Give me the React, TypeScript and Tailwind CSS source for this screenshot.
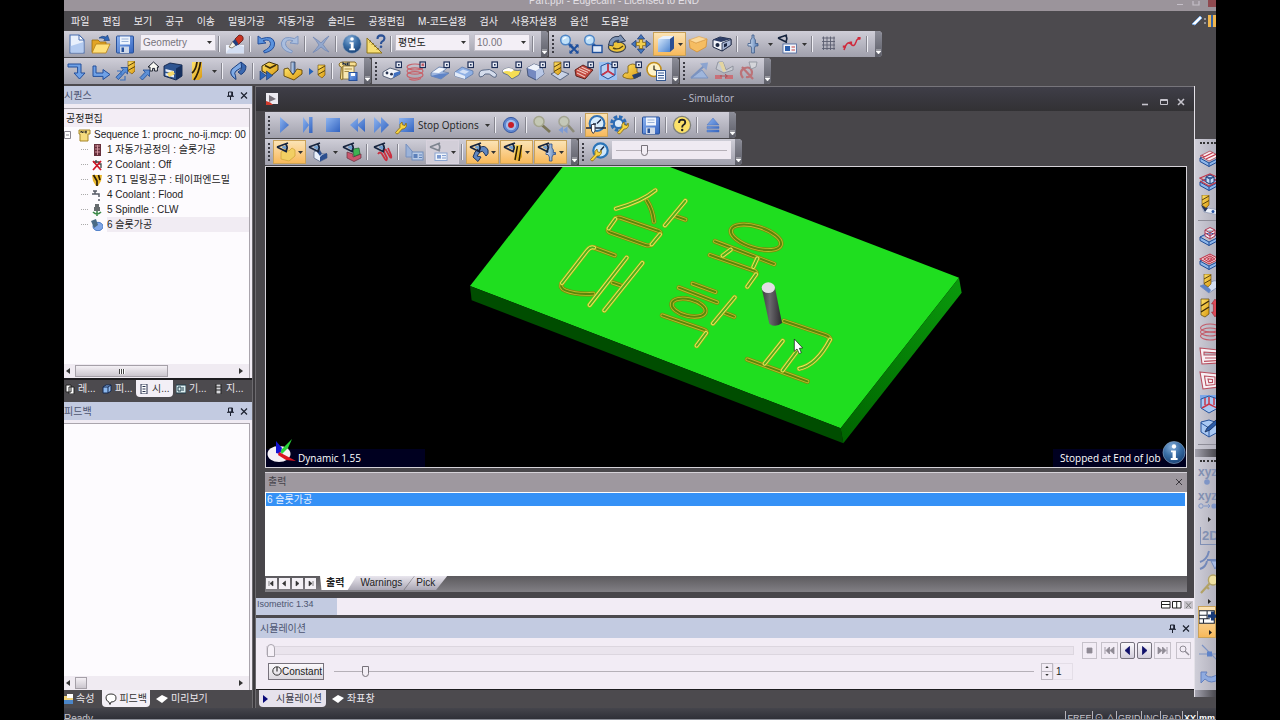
import React from "react";

type Node = React.ReactNode;

/* ---------- icon drawings, all on a 20 x 20 grid ---------- */

const Flag = () => (
  <g>
    <rect x="14" y="1" width="5.5" height="5.5" fill="#eef1fa" stroke="#1b2c55" strokeWidth="1.2" />
    <rect x="16" y="3" width="1.6" height="1.6" fill="#1b2c55" />
  </g>
);

const Eye = () => (
  <g>
    <path d="M1 5 L12 1 M1 5 L11 10 M9.5 2.2 Q12.5 5 10 9" fill="none" stroke="#17253f" strokeWidth="1.8" />
    <path d="M6 4.6 L9.6 3.4 Q10.8 5.6 9.4 7.6 L6 5.8Z" fill="#6f9fd0" />
  </g>
);

const Drill = ({ x = 0, y = 0 }: { x?: number; y?: number }) => (
  <g transform={`translate(${x} ${y})`}>
    <path d="M0 0 H7 V10 L4 13 L0 10Z" fill="url(#gold)" stroke="#6b4a08" strokeWidth=".6" />
    <path d="M0 5 L7 1 M0 9.5 L7 5.5" stroke="#5a420c" strokeWidth="1" />
  </g>
);

const Wrench = ({ x = 0, y = 0 }: { x?: number; y?: number }) => (
  <g transform={`translate(${x} ${y})`}>
    <path d="M1.5 11.5 L6 6.5 Q5 3 8 1 L8.5 3.8 L11 4.5 L12 2 Q13.5 6 10 7.8 L8.2 8 L4 12.8 Q2 13.4 1.5 11.5Z" fill="#f6d243" stroke="#8a6a10" strokeWidth=".8" />
  </g>
);

const Lens = () => (
  <g>
    <path d="M9 9 L14 14" stroke="#2b5ea8" strokeWidth="2.6" />
    <circle cx="6.5" cy="6" r="4.8" fill="#bfe0f8" stroke="#4f86c6" strokeWidth="1.5" />
    <path d="M4 5.5 Q5 3.5 7.4 3.6" stroke="#fff" strokeWidth="1.2" fill="none" />
  </g>
);

const Slab = () => (
  <path d="M1 11 L11 6 L20 11 V14 L10 19.5 L1 14.5Z M1 11 L10 16 L20 11 M10 16 V19.5" fill="#8db6ea" stroke="#1e4b96" strokeWidth="1" />
);

const icons: Record<string, Node> = {
  New: (
    <g>
      <path d="M3 1 H12 L17 6 V19 H3Z" fill="#e9f0fc" stroke="#4a6fb0" strokeWidth="1.1" />
      <path d="M3.8 12 L16.4 8 V18.4 H3.8Z" fill="#b4cbf0" />
      <path d="M12 1 L12 6 H17Z" fill="#fff" stroke="#4a6fb0" strokeWidth="1" />
    </g>
  ),
  Open: (
    <g>
      <path d="M1 6 H7 L9 8 H15 V18 H1Z" fill="#e2a425" stroke="#9b6c10" strokeWidth=".8" />
      <path d="M5 10 H19 L15 19 H1Z" fill="#ffe07a" stroke="#b58218" strokeWidth=".8" />
      <path d="M8 4 Q11 1 15 3 L16.5 1 L18.5 6.5 L12.8 6.5 L14 5 Q11 3.6 8 4Z" fill="#2f67b8" stroke="#1a3c78" strokeWidth=".6" />
    </g>
  ),
  Save: (
    <g>
      <rect x="1.5" y="2" width="17" height="17" rx="1" fill="url(#blue)" stroke="#27509a" />
      <rect x="5" y="2.5" width="10" height="8" fill="#eef4fd" />
      <path d="M6.5 5 H13.5 M6.5 7.5 H13.5" stroke="#9bb3d8" />
      <rect x="5" y="12.5" width="9" height="6.5" fill="#cfd8e8" />
      <rect x="6.5" y="13.5" width="2.5" height="4.5" fill="#27509a" />
    </g>
  ),
  Erase: (
    <g>
      <path d="M1 11 H19 V19.5 H1Z" fill="#eef2fb" />
      <path d="M3 16 L10 9 L19 13 V19 H1Z" fill="#d3def2" />
      <path d="M4 13 L8 7 L12 10.5 L7 14Z" fill="#f4efe4" stroke="#756b5b" strokeWidth=".8" />
      <path d="M10 5 L14 1 Q19 1 18 6 L13.5 10.5Z" fill="#c83322" stroke="#5b1712" strokeWidth=".8" />
      <path d="M10 5 L13.5 10.5 L11 12 L7.5 7.8Z" fill="#22407e" />
    </g>
  ),
  Undo: <path d="M2 2 L2 10 L10 9 L7 6.7 Q14 4.5 14.5 9.5 Q14.5 14 7.5 17 L8.5 19 Q19 16.5 18.6 9 Q17 1 5.5 4.6Z" fill="#5b93de" stroke="#244f9c" strokeWidth="1" />,
  Redo: <path d="M18 2 L18 10 L10 9 L13 6.7 Q6 4.5 5.5 9.5 Q5.5 14 12.5 17 L11.5 19 Q1 16.5 1.4 9 Q3 1 14.5 4.6Z" fill="#a9bedf" stroke="#7f97c2" strokeWidth="1" />,
  Delete: <path d="M2 3 Q8 7 10 9 Q13 5 18 2 Q14 7 12 10.5 Q15 15 18 18 Q13 16 10 13 Q7 16 2 18.5 Q6 14 8 11 Q5 6 2 3Z" fill="#93a8cd" stroke="#7187b2" strokeWidth=".8" />,
  Info: (
    <g>
      <circle cx="10" cy="10" r="9.2" fill="url(#orb)" stroke="#8fa9c8" strokeWidth=".5" />
      <circle cx="10" cy="5" r="1.8" fill="#fff" />
      <path d="M7.5 8.3 H11.6 V14.6 H13 V16.2 H7.3 V14.6 H8.8 V9.8 H7.5Z" fill="#fff" />
    </g>
  ),
  Measure: (
    <g>
      <path d="M1 4 L16 19 H1Z" fill="#f6de74" stroke="#8f7417" strokeWidth="1" />
      <path d="M3.5 8 L5 6.6 M6 10.5 L7.5 9 M8.5 13 L10 11.5 M11 15.5 L12.5 14" stroke="#554208" strokeWidth="1" />
      <path d="M11.5 5 Q11.5 1.4 15 1.4 Q18.6 1.6 18.4 4.6 Q18.2 6.6 16 7.6 Q15 8.2 15 10" fill="none" stroke="#2c5296" strokeWidth="2.1" />
      <circle cx="15" cy="12.8" r="1.3" fill="#2c5296" />
    </g>
  ),
  ZoomExtents: (
    <g>
      <Lens />
      <path d="M11 11 L19 19 M19 11 L11 19" stroke="#1e4f9c" strokeWidth="1.8" />
      <path d="M10.5 10.5 h3.5 l-3.5 3.5Z M19.5 10.5 v3.5 l-3.5 -3.5Z M10.5 19.5 v-3.5 l3.5 3.5Z M19.5 19.5 h-3.5 l3.5 -3.5Z" fill="#1e4f9c" />
    </g>
  ),
  ZoomWindow: (
    <g>
      <Lens />
      <rect x="9.5" y="11.5" width="9.5" height="7" fill="#dfe9f8" stroke="#1e4f9c" strokeWidth="1.4" />
    </g>
  ),
  Orbit: (
    <g>
      <ellipse cx="10" cy="13" rx="8.6" ry="5.4" fill="#efc53a" stroke="#3d4453" strokeWidth="1.2" />
      <path d="M1.5 11 Q3 1.5 12 2.5 L13.5 .8 L18.5 7 L10.5 8.6 L12 6.2 Q6 6 6 12Z" fill="#7d93b5" stroke="#2e3c56" strokeWidth="1" />
      <path d="M6 14 Q11 16.5 16 12" fill="none" stroke="#5a4a14" strokeWidth="1.4" />
    </g>
  ),
  Pan: (
    <g>
      <path d="M10 .5 L13.6 5 H6.4Z M10 19.5 L13.6 15 H6.4Z M.5 10 L5 6.4 V13.6Z M19.5 10 L15 6.4 V13.6Z" fill="#4777bd" stroke="#1e3f7d" strokeWidth=".8" />
      <path d="M8.4 5.4 H11.6 V8.4 H14.6 V11.6 H11.6 V14.6 H8.4 V11.6 H5.4 V8.4 H8.4Z" fill="#f3cf4d" stroke="#846512" strokeWidth=".8" />
    </g>
  ),
  Cube: (
    <g>
      <path d="M2 5 L7 2 H18 L14 5Z" fill="#e8f1fc" />
      <path d="M2 5 H14 V18 H2Z" fill="url(#sky)" />
      <path d="M14 5 L18 2 V14.5 L14 18Z" fill="#2a4f93" />
    </g>
  ),
  Shell: (
    <g>
      <path d="M1 6 L8 9 L19 5 L18 13 L9 18 L2 14Z" fill="#f5bd62" stroke="#d38f34" strokeWidth=".8" />
      <path d="M1 6 L11 2.5 L19 5 L8 9Z" fill="#fbd99a" stroke="#e0a552" strokeWidth=".7" />
    </g>
  ),
  Section: (
    <g>
      <path d="M1 6 L8 3 L19 5 V11 L10 17 L1 13Z" fill="#f2f4fa" stroke="#1c2742" strokeWidth="1" />
      <path d="M1 6 L9 8 L19 5 L8 3Z" fill="#2d3d66" />
      <circle cx="5.5" cy="11" r="2" fill="#1c2742" />
      <path d="M10 9 L19 5.5 V11 L10 17Z" fill="#a9b7d4" stroke="#1c2742" strokeWidth=".8" />
      <path d="M12 10 L15 9 V12 L12 13.5Z" fill="#1c2742" />
    </g>
  ),
  Holder: <path d="M9 1 H11 V4 L12.4 6 V9.5 H15 V12 H12.4 L11.4 14 V19 H8.6 V14 L7.6 12 H5 V9.5 H7.6 V6 L9 4Z" fill="url(#steel)" stroke="#3c5a88" strokeWidth=".8" />,
  ViewBox: (
    <g>
      <path d="M1 4 L10 1 M1 4 L10 8.5 M8.5 1.6 Q11 4 8.8 7.6" fill="none" stroke="#17253f" strokeWidth="1.6" />
      <rect x="6" y="10" width="13.5" height="9" fill="#f4f6fb" stroke="#46649c" strokeWidth=".8" />
      <rect x="8" y="12" width="5" height="5" fill="#2a5fae" />
      <path d="M14.5 13 H18 M14.5 16 H18" stroke="#c64242" strokeWidth="1.2" />
    </g>
  ),
  Grid: <path d="M4 4 H17 M4 7.5 H17 M4 11 H17 M4 14.5 H17 M5.5 2.5 V16 M9 2.5 V16 M12.5 2.5 V16 M16 2.5 V16" stroke="#5b5f70" strokeWidth=".9" />,
  Spline: (
    <g>
      <path d="M2 16 Q5 6 9 10 Q12 14 14 8 Q15 4 18 5" fill="none" stroke="#cf2a3c" strokeWidth="1.5" />
      <path d="M.8 11.5 h3 v2.2 h-3Z M7.5 7.5 h2.6 v2.6 h-2.6Z M15.6 3 h3 v2.6 h-3Z" fill="#cf2a3c" />
    </g>
  ),
  StepDown: <path d="M1 3 H14 V12 H18 L12.5 18 L7 12 H10.6 V6 H1Z" fill="#6fa1e6" stroke="#234f9b" strokeWidth="1" />,
  StepRight: <path d="M2 5 H5 V12 H12 V8.5 L19 13.5 L12 18.5 V15.4 H2Z" fill="#6fa1e6" stroke="#234f9b" strokeWidth="1" />,
  ToTool: (
    <g>
      <Drill x={13} y={0} />
      <path d="M6 6.5 H12.5 V13 L10.4 11 L3.4 18.6 L1 16.2 L8.2 8.8Z" fill="#5c8fd6" stroke="#1e4b96" strokeWidth=".8" />
      <path d="M2 10 H6 V14 M5 19 H10 V15" fill="none" stroke="#3d70bb" strokeWidth="1.2" />
    </g>
  ),
  ToHome: (
    <g>
      <path d="M9 6 L14.5 1 L20 6 H18.4 V10 H15.6 V7.4 H13.6 V10 H11 V6Z" fill="#f7f7f2" stroke="#1d2230" strokeWidth="1" />
      <path d="M4 9 H10.5 V15.5 L8.6 13.6 L3.4 19 L1 16.6 L6.2 11.2Z" fill="#5c8fd6" stroke="#1e4b96" strokeWidth=".8" />
    </g>
  ),
  Store: (
    <g>
      <path d="M1 5 L7 2 L19 4 V15 L13 19 L1 15Z" fill="#2f5591" stroke="#13254a" strokeWidth=".9" />
      <path d="M13 7.5 L19 4 V15 L13 19Z" fill="#16305f" />
      <path d="M2.5 8 L11 10 V12.4 L2.5 10.5Z M2.5 12 L11 14 V16.6 L2.5 14.4Z" fill="#e4ecf8" />
      <path d="M4 12 L10 10 L12 13 L6 16Z" fill="#f6d96c" />
    </g>
  ),
  DrillTool: (
    <g>
      <path d="M5 1 H15 V16 L12 19 H5Z" fill="url(#gold)" />
      <path d="M5 12 Q9 9 10 1 M7 19 Q12 12 13.5 1" stroke="#2b1e08" strokeWidth="1.8" fill="none" />
    </g>
  ),
  Rotate: (
    <g>
      <path d="M13 1 L4 8 Q1 12 5 16 L8 18.5 L7.5 14.8 Q5.6 12 8 10 L15 5.6Z" fill="#7fabe6" stroke="#1c3f7e" strokeWidth="1" />
      <path d="M13 1 L18 5 Q18 11 13 13.5 L10 11 Q14 9 13.6 6.4Z" fill="#3a68b0" stroke="#1c3f7e" strokeWidth="1" />
    </g>
  ),
  Ffwd: (
    <g>
      <path d="M3 5 L10 1 L19 4 V9 L12 15 L3 10Z" fill="url(#gold)" stroke="#3f2f08" strokeWidth="1" />
      <path d="M6 4.5 L11 7 L17 4" fill="none" stroke="#3f2f08" strokeWidth="1.6" />
      <path d="M1 10 L7 14.5 L1 19Z M7.5 10 L13.5 14.5 L7.5 19Z" fill="#2d66b9" stroke="#143870" strokeWidth=".6" />
    </g>
  ),
  Plunge: (
    <g>
      <path d="M1 8 L5 7 L10 14 L14 8 L19 9 V13 L11 19 L1 15Z" fill="url(#gold)" stroke="#5d450a" strokeWidth=".9" />
      <path d="M8 1 H12 V11 L10 13 L8 11Z" fill="url(#steel)" stroke="#35425c" strokeWidth=".8" />
    </g>
  ),
  NextTool: (
    <g>
      <path d="M2 7 L6.5 10.5 L2 14Z" fill="#2563b8" />
      <Drill x={11} y={4} />
    </g>
  ),
  NcCode: (
    <g>
      <path d="M1 3 Q2 1 5 1 H17 Q19 2 18 5 H5 V18 Q3 20 2.4 17 L3.4 6 Q1 6 1 3Z" fill="#f7df92" stroke="#7d611c" strokeWidth=".9" />
      <path d="M5 5 H16 V18 H5Z" fill="#f9e8b2" stroke="#7d611c" strokeWidth=".7" />
      <path d="M5 4 V1.8 L8 4 V1.8 M12 2 H9.6 V4 H12" stroke="#17253f" strokeWidth="1.1" fill="none" />
      <path d="M6.5 8 H14 M6.5 10.5 H11" stroke="#a88c45" />
      <rect x="11" y="11.5" width="8" height="8" fill="url(#blue)" stroke="#27509a" />
      <rect x="13" y="12" width="4" height="3" fill="#fff" />
    </g>
  ),
  MillFace: (
    <g>
      <path d="M1 11 L8 7 L18 10 V13 L9 18 L1 15Z" fill="#f3f5fa" stroke="#3a4660" strokeWidth=".8" />
      <circle cx="5" cy="12" r="1.4" fill="#2a3654" />
      <circle cx="9.5" cy="13.2" r="1.4" fill="#2a3654" />
      <path d="M12 12 L18 10 V13 L11 17Z" fill="#3f6fc0" />
      <Flag />
    </g>
  ),
  Spiral: (
    <g fill="none" stroke="#c8626a" strokeWidth="1.2">
      <ellipse cx="9" cy="6" rx="8" ry="3" />
      <ellipse cx="9" cy="10" rx="8" ry="3.2" />
      <ellipse cx="9" cy="14" rx="8" ry="3.4" />
      <path d="M3 18 Q9 20.5 15 17.5" />
      <Flag />
    </g>
  ),
  Step: (
    <g>
      <path d="M1 12 L9 6 L17 7 L13 10.5 L19 12 L11 18 L1 15Z" fill="#9fb6de" stroke="#5d769f" strokeWidth=".7" />
      <path d="M2 11.4 L9 6.7 L16 7.4 L9 12Z" fill="#f2f6fd" />
      <path d="M1 15 L9 13 L19 12 L11 18Z" fill="#5e83c6" />
      <Flag />
    </g>
  ),
  Pocket: (
    <g>
      <path d="M1 11 L8 6 L19 10 V13 L11 18 L1 15Z" fill="#8fb0e4" stroke="#5573a8" strokeWidth=".7" />
      <path d="M5 11 L9 8.5 L15 10.5 L11 13Z" fill="#d3e0f6" />
      <path d="M1 11 L11 15 V18 L1 15Z" fill="#e3ebf8" />
      <Flag />
    </g>
  ),
  Profile: (
    <g>
      <path d="M1 14 Q1 9 6 9 Q12 7 16 11 Q20 13 18 16 Q16 17 14 15 Q12 12 7 13 Q5 16 2 16Z" fill="#d4dcec" stroke="#51617f" strokeWidth=".9" />
      <Flag />
    </g>
  ),
  Surface: (
    <g>
      <path d="M1 9 Q7 5 12 9 Q16 10 19 9 L17 14 L10 18 Q6 13 1 12Z" fill="#f5dd54" stroke="#5f6d89" strokeWidth=".9" />
      <path d="M1 9 Q7 5 12 9 L9 11 Q5 9 1 11Z" fill="#fff" />
      <Flag />
    </g>
  ),
  Solid: (
    <g>
      <path d="M1 7 L8 3 L16 6 L18 13 L10 19 L2 15Z" fill="#7589c0" stroke="#344568" strokeWidth=".8" />
      <path d="M1 7 L10 10 L16 6 L8 3Z" fill="#eff3fb" />
      <path d="M10 10 L16 6 L18 13 L10 19Z" fill="#b9c8e6" />
      <Flag />
    </g>
  ),
  DrillOp: (
    <g>
      <path d="M1 13 L9 9 L19 13 L10 19Z" fill="#c9d3e6" stroke="#42516e" strokeWidth=".8" />
      <Drill x={4} y={1} />
      <Flag />
    </g>
  ),
  Rough: (
    <g>
      <path d="M1 9 L9 4 L19 9 L11 18 L2 15Z" fill="#c24a41" stroke="#561712" strokeWidth=".9" />
      <path d="M3 9 L12 13 M5 7.6 L14 11.6 M7.5 6 L16 10 M3 12 L11 16" stroke="#f2c8bd" strokeWidth="1.1" />
      <Flag />
    </g>
  ),
  Planes: (
    <g>
      <rect x="1" y="1" width="18" height="18" fill="#9ec2f2" />
      <path d="M3 5 L10 2 L17 5 V14 L10 18 L3 14Z M10 2 V10 L3 14 M10 10 L17 14" fill="#b7cff2" stroke="#27539c" strokeWidth="1" />
      <path d="M10 10 V3 M10 10 L4 14 M10 10 L16 14" stroke="#c8374a" strokeWidth="1.8" />
      <Flag />
    </g>
  ),
  Cap: (
    <g>
      <path d="M1 14 Q3 11 6 12 V5 Q11 1 15 5 V11 Q20 13 16 16 Q9 20 1 16Z" fill="url(#gold)" stroke="#7a5a0c" strokeWidth=".8" />
      <path d="M10 14 L19 11 V15 L12 18Z" fill="#27406e" />
      <Flag />
    </g>
  ),
  Timing: (
    <g>
      <circle cx="8" cy="8.5" r="7" fill="#fdf3c9" stroke="#c08e1d" strokeWidth="1.6" />
      <path d="M8 4.5 V8.5 L12 10" stroke="#3a3420" strokeWidth="1.3" fill="none" />
      <rect x="10.5" y="9.5" width="9" height="10" fill="#f4f8ff" stroke="#34588f" />
      <path d="M12 12 H18 M12 14.5 H18 M12 17 H18" stroke="#34588f" strokeWidth="1.1" />
    </g>
  ),
  Angle: (
    <g>
      <path d="M1 17 H18 L12 9Z" fill="#9fb6dc" stroke="#7b93c0" />
      <path d="M1 17 L14 5" stroke="#7b93c0" strokeWidth="2" />
      <path d="M10 2.5 L18 1.5 L16.5 9.5Z" fill="#8ca4d0" />
    </g>
  ),
  FixA: (
    <g>
      <path d="M4 1 H9 L12 9 L19 5 V9 L10 12 L2 8Z" fill="#c8cbd2" stroke="#858a96" strokeWidth=".8" />
      <path d="M5 1 L9 1 L12 10 L9 11Z" fill="#e3d5a1" />
      <path d="M1 14 H8 V18 H1Z M11 14 H19 V18 H11Z" fill="#c87078" />
      <path d="M6 15 H13 M11 13 L13.4 15 L11 17" stroke="#a8545c" fill="none" />
    </g>
  ),
  FixB: (
    <g>
      <path d="M5 17 Q0 10 7 7 Q13 5 14 11 Q14 17 8 16 M4 6 L15 18" fill="none" stroke="#bb7378" strokeWidth="2.2" />
      <path d="M11 1 L13 8 L18 6 L19 1Z" fill="#d4d5da" stroke="#8c909b" strokeWidth=".8" />
    </g>
  ),
  Play: <path d="M5 2 L14 10 L5 18Z" fill="url(#blue)" />,
  StepFwd: <path d="M4 2 L10 10 L4 18Z M10 2 H13.5 V18 H10Z" fill="url(#blue)" />,
  Stop: <path d="M3 3 H17 V17 H3Z" fill="url(#blue)" />,
  Back: <path d="M11 3 V17 L3 10Z M18 3 V17 L10 10Z" fill="url(#blue)" />,
  Forward: <path d="M3 2 V18 L11 10Z M10 2 V18 L18 10Z" fill="url(#blue)" />,
  StopOpts: (
    <g>
      <path d="M4 3 H19 V17 H4Z" fill="url(#blue)" />
      <Wrench x={-1} y={6} />
    </g>
  ),
  Record: (
    <g>
      <circle cx="10" cy="10" r="7.6" fill="#5f86cf" stroke="#3a5ba2" />
      <circle cx="10" cy="10" r="5.2" fill="#a5bdea" />
      <circle cx="10" cy="10" r="3" fill="#c81e28" />
    </g>
  ),
  Find: (
    <g>
      <path d="M10 10 L18 17" stroke="#7b7658" strokeWidth="2.8" />
      <circle cx="7" cy="6.5" r="5" fill="#c4c8b4" stroke="#a4a58e" strokeWidth="1.6" />
    </g>
  ),
  FindBack: (
    <g>
      <path d="M11 9 L18 17" stroke="#8b8a78" strokeWidth="2.6" />
      <circle cx="8" cy="6.5" r="5" fill="#c4c8b8" stroke="#a4a594" strokeWidth="1.6" />
      <path d="M7 11.5 L2.5 15 L7 18.5Z M11.5 11.5 L7 15 L11.5 18.5Z" fill="#7f9bd2" />
    </g>
  ),
  Gauge: (
    <g>
      <circle cx="11" cy="8.5" r="7.4" fill="#d7ecfb" stroke="#3473b4" strokeWidth="2" />
      <path d="M11 8.5 L15 4.5 M7 9 H10" stroke="#17253f" strokeWidth="1.3" />
      <path d="M0 13 H20" stroke="#17253f" strokeWidth="1.4" />
      <path d="M5.5 9.5 H9 V16 L7.3 18.5 L5.5 16Z" fill="#fff" stroke="#3a3f4d" strokeWidth="1" />
    </g>
  ),
  Settings: (
    <g>
      <circle cx="8.5" cy="8.5" r="6.3" fill="none" stroke="#2f6db5" strokeWidth="4" strokeDasharray="3.2 1.7" />
      <circle cx="8.5" cy="8.5" r="4.6" fill="#dcebfa" stroke="#2f6db5" strokeWidth="2" />
      <Wrench x={6} y={6} />
    </g>
  ),
  Help: (
    <g>
      <circle cx="10" cy="10" r="8.6" fill="#fbe169" stroke="#7e8079" strokeWidth="1.3" />
      <path d="M7 8 Q7 4.6 10.2 4.6 Q13.4 4.8 13.2 7.6 Q13 9.2 11.3 10 Q10.2 10.6 10.2 12.4" fill="none" stroke="#222" strokeWidth="1.9" />
      <circle cx="10.2" cy="15" r="1.2" fill="#222" />
    </g>
  ),
  Eject: <path d="M10 3 L16 10 H4Z M4 11.6 H16 V13.4 H4Z M4 15 H16 V17 H4Z" fill="url(#blue)" stroke="#4a72be" strokeWidth=".5" />,
  ShowStock: (
    <g>
      <path d="M5 10 L9 7 L13 9 L16 6 L19 8 V14 L13 19 L5 17Z" fill="#f2cf63" stroke="#d2a63a" strokeWidth=".8" />
      <Eye />
    </g>
  ),
  ShowPart: (
    <g>
      <path d="M6 10 L11 7 L14 12 L19 12 V16 L12 19.5 L6 16Z" fill="#e9f0fa" stroke="#4b5c7c" strokeWidth=".7" />
      <path d="M14 13 L19 11 V16 L12 19.5 V15Z M11 7 L14 12 L12 14 L9 10Z" fill="#2c4f8f" />
      <Eye />
    </g>
  ),
  ShowFixture: (
    <g>
      <path d="M5 10 L11 12 V15 L19 12 V16 L12 19.5 L5 16Z" fill="#c9566d" stroke="#67303c" strokeWidth=".7" />
      <path d="M11 7 L17 6 L18 12 L12 14.5Z" fill="#3fb453" stroke="#1e5c2a" strokeWidth=".7" />
      <Eye />
    </g>
  ),
  ShowPath: (
    <g>
      <path d="M5 12 Q7 9 9 12 L12 17 Q14 20 14 16 L11 10 Q11 6 13 8 L17 15 Q19 17 18 13 L15 6" fill="none" stroke="#c93040" strokeWidth="1.8" />
      <Eye />
    </g>
  ),
  Align: (
    <g>
      <path d="M2 2 L13 15 H2Z" fill="#9bb2d8" stroke="#7690bf" />
      <rect x="8" y="10" width="11" height="8" fill="#b9cbe6" stroke="#6f8cbc" />
      <rect x="9.5" y="12" width="4" height="4" fill="#5c80ba" />
      <path d="M15 13 H18 M15 15.5 H18" stroke="#5c80ba" />
    </g>
  ),
  ViewLabel: (
    <g>
      <path d="M1 5 L11 1 M1 5 L11 9 M9.5 2 Q12 5 9.6 8.4" fill="none" stroke="#7f8590" strokeWidth="1.7" />
      <rect x="6" y="11" width="12" height="7.5" fill="#f0f4fa" stroke="#8aa4cf" />
      <rect x="8" y="13" width="4" height="3.6" fill="#7c9ad0" />
      <path d="M13 13.6 H17 M13 16 H17" stroke="#7c9ad0" />
    </g>
  ),
  ShowClamp: (
    <g>
      <path d="M10 6 Q16 2 19 8 Q20 12 17 14 L15 11 Q14 8 11 10 L8 14 L12 15 L9 19.5 L4 15 L6 10Z" fill="#5f86c0" stroke="#1f3459" strokeWidth="1" />
      <Eye />
    </g>
  ),
  ShowTool: (
    <g>
      <path d="M12 3 H19 V15 L16 19 L11 18Z" fill="url(#gold)" />
      <path d="M12 18 L14.5 4 M16 19 L18.5 3" stroke="#2b1e08" strokeWidth="1.5" />
      <Eye />
    </g>
  ),
  ShowHolder: (
    <g>
      <path d="M12 2 H15 V6 L16.4 8 V10.5 H18.5 V12.5 H16.4 L15 15 V19 H12.4 V15 L11 12.5 H9 V10.5 H11 V8 L12 6Z" fill="url(#steel)" stroke="#2c4f8b" strokeWidth=".8" />
      <Eye />
    </g>
  ),
  SpeedTool: (
    <g>
      <circle cx="11.5" cy="8.5" r="7.2" fill="#cfe7fa" stroke="#2b74b8" strokeWidth="2.2" />
      <path d="M11.5 8.5 L15 4.5" stroke="#17253f" strokeWidth="1.3" />
      <Wrench x={0} y={6} />
    </g>
  ),
  SlabHatch: (
    <g>
      <Slab />
      <path d="M1 9 L11 4 L20 9 L10 14Z" fill="#fbeef0" stroke="#a94455" strokeWidth=".8" />
      <path d="M4 10.5 L14 5.5 M7 12 L17 7.4 M2.5 8.2 L6 10" stroke="#c0384c" strokeWidth="1.2" />
    </g>
  ),
  SlabBoss: (
    <g>
      <Slab />
      <path d="M1 7 L11 3 L20 7 L10 12Z M1 10 L10 15 L20 10" fill="none" stroke="#c0384c" strokeWidth="1.2" />
      <path d="M7 6 L11 4 L15 6 V11 L11 13 L7 11Z M7 6 L11 8 L15 6 M11 8 V13" fill="#c5dbf7" stroke="#1e3e7d" strokeWidth="1" />
    </g>
  ),
  Chamfer: (
    <g>
      <path d="M3 12 L20 15 V20 L5 17Z" fill="#eef2fa" stroke="#8794b0" strokeWidth=".7" />
      <path d="M2 10 L9 13 L6 17Z" fill="#22335a" />
      <circle cx="14" cy="16.5" r="1.5" fill="#2b56a4" />
      <Drill x={3} y={0} />
    </g>
  ),
  BossCube: (
    <g>
      <Slab />
      <path d="M6 4 L11 1.5 L16 4 V10 L11 13 L6 10Z M6 4 L11 7 L16 4 M11 7 V13 M6 7 L11 10 L16 7" fill="#f3e8f0" stroke="#b03650" strokeWidth="1" />
    </g>
  ),
  SlabSpiral: (
    <g>
      <Slab />
      <path d="M1 9 L11 4 L20 9 L10 14Z M5 9 L11 6 L16 9 L10 12Z M8.5 9 L11 7.8 L13 9 L10.4 10.4Z" fill="#fbeef0" stroke="#c0384c" strokeWidth="1.1" />
    </g>
  ),
  DrillFace: (
    <g>
      <path d="M1 12 L12 8 Q19 4 20 12 L10 19Z" fill="#d3ddef" stroke="#7a8cb2" strokeWidth=".8" />
      <path d="M1 12 L6 10 L12 16 L10 19Z" fill="#5e83c6" />
      <Drill x={5} y={0} />
    </g>
  ),
  DrillDepth: (
    <g>
      <path d="M2 1 H10 V16 L6 19 L2 17Z" fill="url(#gold)" stroke="#5a430a" strokeWidth=".7" />
      <path d="M2 8 L10 3 M2 14 L10 9" stroke="#3b2a08" strokeWidth="1.4" />
      <path d="M16 1 L19.5 6 H17.6 V14 H19.5 L16 19 L12.5 14 H14.4 V6 H12.5Z" fill="#dc4b58" stroke="#8b1e2a" strokeWidth=".5" />
    </g>
  ),
  Rings: (
    <g fill="none" stroke="#c35a68" strokeWidth="1.1">
      <ellipse cx="11" cy="6" rx="9.5" ry="4" />
      <ellipse cx="11" cy="10" rx="9.5" ry="4" />
      <ellipse cx="11" cy="14" rx="9.5" ry="4" />
    </g>
  ),
  Zigzag: (
    <g>
      <path d="M1 2 L19 4 V7 L5 6 V9 H19 V17 L3 18Z" fill="#f7f0f4" stroke="#b84e5e" strokeWidth="1.1" />
      <path d="M6 12 H17 M5 15.4 L17 14.6" fill="none" stroke="#b84e5e" strokeWidth="1.1" />
    </g>
  ),
  Concentric: (
    <g fill="#f7f0f4" stroke="#b84e5e" strokeWidth="1.1">
      <path d="M1 2 L19 4 L20 17 L4 19Z" />
      <path d="M5.5 6 L16 7 V14.5 L7 15.5Z" />
      <path d="M9 9 L13.5 9.4 V12.4 L9.8 12.6Z" />
    </g>
  ),
  PlanesCut: (
    <g>
      <rect x="1" y="1" width="19" height="5" fill="#7ba7e8" />
      <path d="M2 5 L10 2 L19 5 V14 L10 19 L2 14Z" fill="#a9c8f3" stroke="#27539c" strokeWidth="1" />
      <path d="M10 10 V3 M10 10 L3 14 M10 10 L18 14 M6 4 V11 M15 4 V11" stroke="#c8374a" strokeWidth="1.5" />
    </g>
  ),
  PlanesEdit: (
    <g>
      <path d="M2 4 L10 2 L19 5 V14 L10 19 L2 14Z M10 10 L2 5 M10 10 V19 M10 10 L19 5" fill="#a9c8f3" stroke="#27539c" strokeWidth="1" />
      <path d="M6 14 L8 10 L17 2 L20 4 L11 12Z" fill="#2a5aa6" stroke="#152c58" strokeWidth=".8" />
    </g>
  ),
  Intersect: (
    <g>
      <path d="M1 12 Q8 10 10 1 M1 19 Q7 17 8 11 M8 10 H20" fill="none" stroke="#7389ba" strokeWidth="1.9" />
      <path d="M12 11 H20 L16 19Z" fill="#a9bce4" stroke="#7389ba" />
    </g>
  ),
  Pin: (
    <g>
      <path d="M12 8 L2 19 M7 12 L10 15" stroke="#b2a266" strokeWidth="2.2" />
      <ellipse cx="14" cy="6" rx="4.6" ry="5" fill="#efe0a2" stroke="#b2a266" strokeWidth="1.4" />
    </g>
  ),
  Layout: (
    <g>
      <path d="M0 3 H17 V17 H0Z M0 8 H9 M0 12 H12 M9 3 V12 M5 12 V17" fill="#fdfdfd" stroke="#1d2433" strokeWidth="1.2" />
      <path d="M10 9 H20 M15 4 V14" stroke="#173a78" strokeWidth="3.4" />
    </g>
  ),
  Cross: (
    <g>
      <path d="M0 10 H20 M3 1 L20 18" stroke="#7c93c4" strokeWidth="1.2" />
      <rect x="8" y="7.5" width="5" height="5" fill="#5f83c8" />
    </g>
  ),
  Bend: <path d="M2 4 H8 L6.4 7 Q12 12 20 5 V11 Q12 17 6 11 L2 15Z" fill="#8fabe0" stroke="#6481bf" strokeWidth="1" />,
};

/* ---------- small building blocks ---------- */

const Glyph = ({ name, className = "size-5 shrink-0" }: { name: string; className?: string }) => (
  <svg viewBox="0 0 20 20" className={className} aria-hidden="true">
    {icons[name]}
  </svg>
);

const Caret = ({ className = "h-[3px] w-[5px]" }: { className?: string }) => (
  <svg viewBox="0 0 5 3" className={className} aria-hidden="true">
    <path d="M0 0 H5 L2.5 3Z" fill="#333" />
  </svg>
);

const Tool = ({ name }: { name: string }) => (
  <button aria-label={name} className="flex h-6 w-6 shrink-0 items-center justify-center">
    <Glyph name={name} />
  </button>
);

const Drop = () => (
  <button aria-label="More" className="flex h-6 w-[10px] shrink-0 items-center justify-center">
    <Caret />
  </button>
);

const Lit = ({ name, pale = false }: { name: string; pale?: boolean }) => (
  <button
    aria-label={name}
    className={
      pale
        ? "flex h-6 w-[33px] shrink-0 items-center justify-between border border-[#d8d2dd] bg-[#d2ced8] px-[2px]"
        : "flex h-6 w-[33px] shrink-0 items-center justify-between border border-[#c9a25a] bg-linear-to-b from-[#fbe3b4] to-[#f7b95a] px-[2px]"
    }
  >
    <Glyph name={name} />
    <Caret />
  </button>
);

const Sep = () => (
  <span className="flex h-6 w-[7px] shrink-0 items-center justify-center">
    <span className="h-4 w-px bg-[#eeeef4] shadow-[-1px_0_0_#85858f]" />
  </span>
);

const Grip = () => <span className="mx-[3px] h-[18px] shrink-0 border-l-2 border-dotted border-[#3c3c44]" />;

const Bar = ({ children }: { children: Node }) => (
  <div className="flex h-[26px] shrink-0 items-center overflow-hidden rounded-r-sm bg-linear-to-b from-[#cfced8] to-[#a0a0ac]">
    {children}
    <span className="ml-1 flex h-full w-[7px] items-end justify-center bg-linear-to-b from-[#8c8d98] to-[#5d5e68] pb-[3px]">
      <svg viewBox="0 0 5 5" className="size-[5px]" aria-hidden="true">
        <path d="M0 0 H5 M0 2 H5 L2.5 5Z" fill="#fff" stroke="#fff" strokeWidth=".6" />
      </svg>
    </span>
  </div>
);

const Combo = ({ label, value, className }: { label: string; value: string; className: string }) => (
  <span className={"relative mb-1 flex h-[17px] shrink-0 items-center bg-[#f3eff6] " + className}>
    <select aria-label={label} className="h-full w-full appearance-none border border-[#c3c0cb] bg-transparent pl-[2px] outline-none">
      <option>{value}</option>
    </select>
    <Caret className="pointer-events-none absolute right-1 h-[3px] w-[5px]" />
  </span>
);

const PinClose = () => (
  <span className="ml-auto flex items-center gap-[5px] pr-[3px]">
    <button aria-label="Pin">
      <svg viewBox="0 0 9 9" className="size-[9px]" aria-hidden="true">
        <path d="M2.5 1 H6.5 V5 H2.5Z M5.7 1 V5 M1 5.3 H8 M4.5 5.3 V9" fill="none" stroke="#1d2230" />
      </svg>
    </button>
    <button aria-label="Close">
      <svg viewBox="0 0 9 9" className="size-[9px]" aria-hidden="true">
        <path d="M1 1.5 L7 7.5 M7 1.5 L1 7.5" stroke="#1d2230" strokeWidth="1.2" />
      </svg>
    </button>
  </span>
);

const HScroll = ({ thumb, grip = false }: { thumb: string; grip?: boolean }) => (
  <div className="flex h-[14px] shrink-0 items-center bg-[#f0ebf2]">
    <svg viewBox="0 0 4 6" className="mx-[2px] h-[6px] w-1" aria-hidden="true">
      <path d="M4 0 V6 L0 3Z" fill="#333" />
    </svg>
    <span className={"ml-[3px] flex h-3 items-center justify-center gap-px border border-[#a5a0a8] bg-linear-to-b from-[#f4f0f5] to-[#cbc6ce] " + thumb}>
      {grip && [0, 1, 2].map((n) => <span key={n} className="h-[5px] w-px bg-[#444] shadow-[1px_0_0_#fff]" />)}
    </span>
    <svg viewBox="0 0 4 6" className="mr-[6px] ml-auto h-[6px] w-1" aria-hidden="true">
      <path d="M0 0 V6 L4 3Z" fill="#333" />
    </svg>
  </div>
);

const menus = ["파일", "편집", "보기", "공구", "이송", "밀링가공", "자동가공", "솔리드", "공정편집", "M-코드설정", "검사", "사용자설정", "옵션", "도움말"];

const treeRows: { text: string; art: Node }[] = [
  {
    text: "1 자동가공정의 : 슬롯가공",
    art: (
      <g>
        <path d="M3 0 H10 V12 H3Z" fill="#66303c" />
        <path d="M4 2 H9 M4 5 H9 M4 8 H9 M6.5 1 V11" stroke="#d89aa5" strokeWidth=".9" />
      </g>
    ),
  },
  {
    text: "2 Coolant : Off",
    art: (
      <g>
        <path d="M2 3 H8 V5 H10 V9 M5 1 V4" fill="none" stroke="#444" strokeWidth="1.3" />
        <path d="M2 2 L10 11 M10 2 L2 11" stroke="#d01828" strokeWidth="1.8" />
      </g>
    ),
  },
  {
    text: "3 T1 밀링공구 : 테이퍼엔드밀",
    art: (
      <g>
        <path d="M1 1 H11 L10 7 L7 12 H5 L2 7Z" fill="#e9b82e" />
        <path d="M2.5 1 L6 7 L6 12 M7.5 1 L9 6" stroke="#2b1e08" strokeWidth="1.7" fill="none" />
      </g>
    ),
  },
  { text: "4 Coolant : Flood", art: <path d="M1 5 H8 V8 M4 2 V5 M2 2 H6 M8 10 V12" fill="none" stroke="#555b66" strokeWidth="1.5" /> },
  {
    text: "5 Spindle : CLW",
    art: (
      <g>
        <path d="M4 0 H8 V3 H9 V7 H3 V3 H4Z" fill="#666b6e" />
        <path d="M2 8 Q6 12 10 8 M6 7 V12" stroke="#3d8a4a" strokeWidth="1.6" fill="none" />
      </g>
    ),
  },
  {
    text: "6 슬롯가공",
    art: (
      <g>
        <ellipse cx="7" cy="7.5" rx="5" ry="4.2" fill="#7fa6e6" stroke="#4b7cc6" />
        <path d="M0 2 L5 0 L7 6 L3 9Z" fill="#4a6b86" />
      </g>
    ),
  },
];

const dockTabs: { text: string; art: Node }[] = [
  { text: "레...", art: <path d="M1 1 H6 V8 H1Z M4 3 H9 V10 H4Z" fill="#fff" stroke="#222" /> },
  { text: "피...", art: <path d="M1 3 L4 1 H9 V7 L6 9 H1Z M1 3 H6 V9 M6 3 L9 1" fill="#8db9ee" stroke="#14284f" /> },
  { text: "시...", art: <path d="M2 0 H8 V10 H2Z M3.5 2.5 H6.5 M3.5 5 H6.5 M3.5 7.5 H6.5" fill="#fff" stroke="#2a3350" /> },
  { text: "기...", art: <path d="M0 1 H10 V9 H0Z M2 3 H5 V7 H2Z M7 3 V7" fill="#dff0f2" stroke="#1c3a48" /> },
  { text: "지...", art: <path d="M3 0 H8 V10 H3Z M3 3 H8 M3 6 H8" fill="#d8d8dc" stroke="#222" /> },
];

/* Groove centre lines of the engraved plate. */
const litGrooves =
  "M468 143 Q545 122 586 88 M676 120 L615 193 M812 266 L788 284 M892 292 L880 318 M500 290 L389 432 M547 306 L433 448 M402 260 Q392 256 382 268 L306 366 M824 409 L759 487 M888 340 L862 377 M738 516 L710 554 M968 540 L914 608 M1010 572 L968 628 M1110 536 Q1070 612 1018 623 M600 220 L575 250 M446 202 L466 174";
const darkGrooves =
  "M560 118 Q578 145 582 182 M645 165 L676 176 M466 174 Q470 168 480 170 L590 208 Q604 212 600 220 M575 250 Q568 256 556 252 L455 216 Q440 212 446 202 M765 241 L942 309 M750 282 L880 328 Q892 332 888 342 M464 283 L402 260 M306 366 Q298 380 316 388 Q350 402 400 398 M458 365 L484 374 M698 368 L766 393 M657 380 L771 424 M795 456 L822 467 M607 463 L730 506 Q742 510 738 518 M972 480 L1096 522 Q1112 528 1110 538 M862 595 L1042 661";

const Grooves = ({ d, edge, core, bed, rings = false }: { d: string; edge: string; core: string; bed: string; rings?: boolean }) => (
  <>
    {[
      { c: edge, w: 15 },
      { c: core, w: 11 },
      { c: bed, w: 6 },
    ].map((s) => (
      <g key={s.w} stroke={s.c} strokeWidth={s.w}>
        <path d={d} />
        {rings && <ellipse cx="888" cy="229" rx="78" ry="32" transform="rotate(17 888 229)" />}
        {rings && <ellipse cx="686" cy="440" rx="52" ry="25" transform="rotate(14 686 440)" />}
      </g>
    ))}
  </>
);

const PlateView = () => (
  <svg viewBox="0 0 920 300" preserveAspectRatio="xMidYMid slice" className="absolute inset-0 h-full w-full" aria-hidden="true">
    <defs>
      <linearGradient id="blue" x1="0" y1="0" x2="1" y2="1">
        <stop offset="0" stopColor="#8db4f0" />
        <stop offset="1" stopColor="#3263c0" />
      </linearGradient>
      <linearGradient id="gold" x1="0" y1="0" x2="1" y2="1">
        <stop offset="0" stopColor="#ffe46a" />
        <stop offset="1" stopColor="#d9980f" />
      </linearGradient>
      <linearGradient id="steel" x1="0" y1="0" x2="1" y2="0">
        <stop offset="0" stopColor="#dfe9f6" />
        <stop offset="1" stopColor="#4f79b4" />
      </linearGradient>
      <linearGradient id="sky" x1="0" y1="0" x2="1" y2="1">
        <stop offset="0" stopColor="#d3e6fb" />
        <stop offset="1" stopColor="#4d84cf" />
      </linearGradient>
      <radialGradient id="orb" cx=".4" cy=".25" r=".8">
        <stop offset="0" stopColor="#84add8" />
        <stop offset=".5" stopColor="#3a6ea6" />
        <stop offset="1" stopColor="#173f73" />
      </radialGradient>
      <linearGradient id="rod" x1="0" y1="0" x2="1" y2="0">
        <stop offset="0" stopColor="#3d3b40" />
        <stop offset=".4" stopColor="#6a686d" />
        <stop offset="1" stopColor="#2b292d" />
      </linearGradient>
      <linearGradient id="side" x1="0" y1="1" x2="1" y2="0">
        <stop offset="0" stopColor="#006400" />
        <stop offset="1" stopColor="#0a9a0c" />
      </linearGradient>
    </defs>
    <g transform="translate(194 -6) scale(.33333)">
      <path d="M30 375 L310 15 H622 L1497 350 L1142 802Z" fill="#1fde1f" />
      <path d="M30 375 L1142 802 L1150 847 L35 418Z" fill="#004d00" />
      <path d="M1142 802 L1497 350 L1505 395 L1150 847Z" fill="url(#side)" />
      <g fill="none" strokeLinecap="round" strokeLinejoin="round">
        <Grooves d={darkGrooves} edge="#80880c" core="#b8bf2a" bed="#5a860a" rings />
        <Grooves d={litGrooves} edge="#a9ae1c" core="#ecee5c" bed="#4fae1c" />
      </g>
      <path d="M905 380 L928 488 Q946 502 966 486 L945 380Z" fill="url(#rod)" />
      <ellipse cx="925" cy="380" rx="20" ry="16" fill="#e3dde4" />
      <path d="M1003 534 L1003 571 L1011 564 L1018 578 L1024 575 L1018 562 L1028 561Z" fill="#fff" stroke="#111" strokeWidth="2" />
    </g>
  </svg>
);

const slider =
  "h-4 appearance-none bg-transparent outline-none [&::-webkit-slider-runnable-track]:h-px [&::-webkit-slider-runnable-track]:bg-[#b5b0b8] [&::-webkit-slider-thumb]:-mt-[5px] [&::-webkit-slider-thumb]:h-[11px] [&::-webkit-slider-thumb]:w-[7px] [&::-webkit-slider-thumb]:appearance-none [&::-webkit-slider-thumb]:rounded-b-sm [&::-webkit-slider-thumb]:border [&::-webkit-slider-thumb]:border-[#77727a] [&::-webkit-slider-thumb]:bg-[#f3eef5]";

const navButtons: { name: string; d: string; on?: boolean; size: string }[] = [
  { name: "Stop", d: "M4 4 H9 V9 H4Z", size: "w-[15px]" },
  { name: "First", d: "M2 3 V10 M6.5 3 V10 L3 6.5Z M11 3 V10 L7 6.5Z", size: "ml-1 w-[17px]" },
  { name: "Previous", d: "M8.5 2.5 V10.5 L4 6.5Z", on: true, size: "ml-[2px] w-[15px]" },
  { name: "Next", d: "M4.5 2.5 V10.5 L9 6.5Z", on: true, size: "ml-[2px] w-[15px]" },
  { name: "Last", d: "M11 3 V10 M6.5 3 V10 L10 6.5Z M2 3 V10 L6 6.5Z", size: "ml-[2px] w-[17px]" },
];

const SideTool = ({ name }: { name: string }) => (
  <button aria-label={name} className="flex h-6 w-6 shrink-0 items-center justify-start pl-px">
    <Glyph name={name} />
  </button>
);

const SideCaret = () => (
  <span className="flex h-[10px] w-[18px] shrink-0 items-center justify-center pl-1">
    <svg viewBox="0 0 3 5" className="h-[5px] w-[3px]" aria-hidden="true">
      <path d="M0 0 V5 L3 2.5Z" fill="#222" />
    </svg>
  </span>
);

const statusCells = ["FREE", "⊙ ∧", "GRID", "INC", "RAD", "XY", "mm"];

export default function App() {
  return (
    <div className="h-screen bg-black px-16 font-['Liberation_Sans','Noto_Sans_CJK_KR',sans-serif] text-[10px] leading-[15px] text-[#222]">
      <div className="flex h-full flex-col overflow-hidden bg-[#4c4a4e]">
        <header className="shrink-0">
          <div className="relative flex h-[11px] items-end justify-center overflow-hidden bg-[#9b949b] pr-[52px] pb-[3px] whitespace-pre text-[#e4e0e6]">
            <span>Part.ppf - Edgecam - Licensed to END</span>
            <svg viewBox="0 0 44 11" className="absolute right-0 bottom-0 h-[11px] w-11" aria-hidden="true">
              <path d="M5 4.5 H11 M21 1 V5 H27 V1" fill="none" stroke="#c5bfc8" strokeWidth="1.2" />
              <path d="M36 0 H44 V7 H36Z" fill="#8f4a50" />
            </svg>
          </div>
          <nav className="flex h-5 items-center gap-[13px] px-[7px] pr-0 text-[#f0eef2]">
            {menus.map((m) => (
              <button key={m} className="shrink-0">
                {m}
              </button>
            ))}
            <span className="ml-auto flex items-center">
              <svg viewBox="0 0 28 16" className="h-4 w-7" aria-hidden="true">
                <path d="M4 11 L12 3 L14 5 L7 12Z" fill="#fff" stroke="#7fb0e8" />
                <path d="M17 7 V5 M17 11 V9" stroke="#ddd" />
                <path d="M20 2 H28 V14 H20Z" fill="#f0b64e" />
                <path d="M24 2 V14" stroke="#3563a8" strokeWidth="2" />
              </svg>
            </span>
          </nav>
          <div className="flex gap-px">
            <Bar>
              <span className="w-px" />
              <Tool name="New" />
              <Tool name="Open" />
              <Tool name="Save" />
              <span className="w-[3px]" />
              <Combo label="Layer" value="Geometry" className="w-[76px] text-[#77737c]" />
              <Sep />
              <Tool name="Erase" />
              <Sep />
              <Tool name="Undo" />
              <Tool name="Redo" />
              <Sep />
              <Tool name="Delete" />
              <Sep />
              <Tool name="Info" />
              <Tool name="Measure" />
              <Sep />
              <Combo label="View" value="평면도" className="w-[75px]" />
              <span className="w-1" />
              <Combo label="Size" value="10.00" className="w-14 text-[#77737c]" />
              <Sep />
            </Bar>
            <Bar>
              <Grip />
              <Tool name="ZoomExtents" />
              <Tool name="ZoomWindow" />
              <Tool name="Orbit" />
              <Tool name="Pan" />
              <Lit name="Cube" />
              <Tool name="Shell" />
              <Tool name="Section" />
              <Sep />
              <Tool name="Holder" />
              <Drop />
              <Tool name="ViewBox" />
              <Drop />
              <Sep />
              <Tool name="Grid" />
              <Tool name="Spline" />
              <Sep />
            </Bar>
          </div>
          <div className="mt-px flex gap-px">
            <Bar>
              <span className="w-px" />
              {["StepDown", "StepRight", "ToTool", "ToHome", "Store", "DrillTool"].map((n) => (
                <Tool key={n} name={n} />
              ))}
              <Drop />
              <Sep />
              <Tool name="Rotate" />
              <Sep />
              <Tool name="Ffwd" />
              <Tool name="Plunge" />
              <Tool name="NextTool" />
              <Sep />
              <Tool name="NcCode" />
            </Bar>
            <Bar>
              <Grip />
              {["MillFace", "Spiral", "Step", "Pocket", "Profile", "Surface", "Solid", "DrillOp", "Rough", "Planes", "Cap", "Timing"].map((n) => (
                <Tool key={n} name={n} />
              ))}
            </Bar>
            <Bar>
              <Grip />
              <Tool name="Angle" />
              <Tool name="FixA" />
              <Tool name="FixB" />
            </Bar>
          </div>
        </header>

        <div className="mt-[2px] flex min-h-0 flex-1">
          {/* docked panels */}
          <aside className="flex w-[188px] shrink-0 flex-col overflow-hidden">
            <section className="flex min-h-0 flex-[292_1_0%] flex-col bg-[#f0ebf3]">
              <h2 className="flex h-[18px] shrink-0 items-center bg-[#c3cbe1] text-[#4c5470]">
                시퀀스
                <PinClose />
              </h2>
              <div className="mt-1 mr-[2px] flex min-h-0 flex-1 flex-col border-t border-r border-[#aaa5ad] bg-[#fdfbfe]">
                <div className="flex h-[18px] shrink-0 items-center bg-[#f3edf5] pl-[2px]">공정편집</div>
                <ul className="min-h-0 flex-1 overflow-hidden whitespace-nowrap">
                  <li className="flex h-[15px] items-center">
                    <svg viewBox="0 0 30 14" className="h-[14px] w-[30px] shrink-0" aria-hidden="true">
                      <path d="M.5 3.5 H6.5 V10.5 H.5Z M2 7 H5" fill="#fff" stroke="#8b8790" />
                      <path d="M15 2 H26 V6 H24 V13 H16 V6 H15Z" fill="#f5dc7e" stroke="#a58528" />
                      <path d="M17 5 V3 L19 5 V3 M23 3.3 H21 V4.8 H23" fill="none" stroke="#222" strokeWidth=".9" />
                    </svg>
                    Sequence 1: procnc_no-ij.mcp: 00
                  </li>
                  {treeRows.map((r, i) => (
                    <li key={r.text} className="flex h-[15px] items-center pl-[17px]">
                      <span className="h-px w-[7px] border-t border-dotted border-[#aaa]" />
                      <svg viewBox="0 0 12 12" className="mr-1 ml-[3px] size-3 shrink-0" aria-hidden="true">
                        {r.art}
                      </svg>
                      <span className={i === 5 ? "flex-1 bg-[#f1ecf3]" : ""}>{r.text}</span>
                    </li>
                  ))}
                </ul>
                <HScroll thumb="w-[93px]" grip />
              </div>
            </section>
            <div className="flex h-6 shrink-0 items-start border-t-2 border-[#1e1d20] text-[#ece9ee]">
              {dockTabs.map((t, i) => (
                <button
                  key={t.text}
                  className={
                    i === 2
                      ? "flex h-[17px] w-[37px] items-center gap-[3px] rounded-b-sm bg-[#f3eff6] pl-[3px] text-[#333]"
                      : i === 0
                        ? "flex h-[17px] w-[35px] items-center gap-[3px] pl-px"
                        : "flex h-[17px] w-[37px] items-center gap-[3px] pl-[3px]"
                  }
                >
                  <svg viewBox="0 0 10 10" className="size-[10px] shrink-0" aria-hidden="true">
                    {t.art}
                  </svg>
                  {t.text}
                </button>
              ))}
            </div>
            <section className="flex min-h-0 flex-[288_1_0%] flex-col bg-[#f0ebf3]">
              <h2 className="flex h-[18px] shrink-0 items-center bg-[#c3cbe1] text-[#4c5470]">
                피드백
                <PinClose />
              </h2>
              <div className="mt-[3px] mr-[2px] flex min-h-0 flex-1 flex-col border-t border-r border-[#aaa5ad] bg-[#fdfbfe]">
                <div className="flex-1" />
                <HScroll thumb="w-3" />
              </div>
            </section>
            <div className="flex h-[18px] shrink-0 items-start text-[#ece9ee]">
              <button className="flex h-[17px] items-center gap-[2px] pr-2">
                <svg viewBox="0 0 10 12" className="h-3 w-[10px]" aria-hidden="true">
                  <path d="M0 3 H9 V11 H0Z" fill="#f0d27a" />
                  <path d="M3 1 H9 V5 H3Z" fill="#fff" />
                  <path d="M0 7 H9 V11 H0Z" fill="#4c86c8" />
                </svg>
                속성
              </button>
              <button className="flex h-[17px] items-center gap-[2px] rounded-b-sm bg-[#f3eff6] px-[3px] text-[#333]">
                <svg viewBox="0 0 12 12" className="size-3" aria-hidden="true">
                  <path d="M6 1 Q11 1 11 5 Q11 9 6 9 L5 11.5 L3.6 8.6 Q1 8 1 5 Q1 1 6 1Z" fill="#fff" stroke="#333" />
                </svg>
                피드백
              </button>
              <button className="flex h-[17px] items-center gap-[3px] px-[6px]">
                <svg viewBox="0 0 12 10" className="h-[10px] w-3" aria-hidden="true">
                  <path d="M0 5 L6 1 L12 4 L6 9Z" fill="#fff" />
                </svg>
                미리보기
              </button>
            </div>
          </aside>

          <div className="w-1 shrink-0 border-x border-[#6c6a6e] bg-[#3c3a3e]" />

          {/* document area */}
          <main className="flex min-w-0 flex-1 flex-col">
            <section className="flex min-h-0 flex-1 flex-col border-t border-[#77757b] bg-[#48464a] pr-[7px] pb-[6px] pl-[9px]">
              <div className="-mr-[7px] -ml-[9px] flex h-6 shrink-0 items-center bg-linear-to-b from-[#3f3e48] to-[#323134] px-[9px]">
                <svg viewBox="0 0 14 14" className="h-[14px] w-[14px]" aria-hidden="true">
                  <path d="M1 1 H13 V12 H1Z" fill="#eceaf0" />
                  <path d="M4 3 L11 7 L4 10Z" fill="#77727a" />
                  <path d="M1 9 Q6 10 8 13 H1Z" fill="#d03a2c" />
                </svg>
                <h1 className="flex-1 pb-[2px] pr-[3px] text-center font-['Open_Sans','Noto_Sans',sans-serif] text-[#b9bccb]">- Simulator</h1>
                <button aria-label="Window controls">
                  <svg viewBox="0 0 44 10" className="mt-[6px] h-[10px] w-11" aria-hidden="true">
                    <path d="M1 7.5 H7" stroke="#c6c4cc" strokeWidth="1.6" />
                    <path d="M19.5 2.5 H26.5 V7.5 H19.5Z M19.5 3.5 H26.5" fill="none" stroke="#c6c4cc" />
                    <path d="M37 2 L43 8 M43 2 L37 8" stroke="#c6c4cc" strokeWidth="1.6" />
                  </svg>
                </button>
              </div>
              <div className="mt-px flex">
                <Bar>
                  <Grip />
                  {["Play", "StepFwd", "Stop", "Back", "Forward", "StopOpts"].map((n) => (
                    <Tool key={n} name={n} />
                  ))}
                  <button className="flex items-center gap-[6px] pr-[2px] pl-px font-['Open_Sans','Noto_Sans',sans-serif] whitespace-nowrap">
                    Stop Options
                    <Caret />
                  </button>
                  <Sep />
                  <Tool name="Record" />
                  <Sep />
                  <Tool name="Find" />
                  <Tool name="FindBack" />
                  <Sep />
                  <span className="border border-[#c9a25a] bg-linear-to-b from-[#fbe3b4] to-[#f7b95a]">
                    <button aria-label="Gauge" className="flex h-[22px] w-[21px] items-center justify-center">
                      <Glyph name="Gauge" />
                    </button>
                  </span>
                  <Tool name="Settings" />
                  <Sep />
                  <Tool name="Save" />
                  <Sep />
                  <Tool name="Help" />
                  <Sep />
                  <Tool name="Eject" />
                </Bar>
              </div>
              <div className="mt-px flex gap-px">
                <Bar>
                  <Grip />
                  <Lit name="ShowStock" />
                  <Tool name="ShowPart" />
                  <Drop />
                  <Tool name="ShowFixture" />
                  <Sep />
                  <Tool name="ShowPath" />
                  <Sep />
                  <Tool name="Align" />
                  <Lit name="ViewLabel" pale />
                  <Sep />
                  <span className="flex gap-px">
                    <Lit name="ShowClamp" />
                    <Lit name="ShowTool" />
                    <Lit name="ShowHolder" />
                  </span>
                </Bar>
                <Bar>
                  <Grip />
                  <Tool name="SpeedTool" />
                  <span className="mb-1 ml-px flex h-[18px] w-[119px] items-center bg-[#efeaf2] px-1">
                    <input type="range" aria-label="Speed" defaultValue={24} className={"w-full " + slider} />
                  </span>
                </Bar>
              </div>

              <div className="relative mt-px min-h-0 flex-1 overflow-hidden border border-[#d5d2d8] bg-black">
                <PlateView />
                <div className="absolute bottom-0 left-0 flex h-[18px] w-[159px] items-center bg-[#000020] pt-px pl-8 font-['Open_Sans','Noto_Sans',sans-serif] text-white">
                  Dynamic 1.55
                </div>
                <svg viewBox="0 0 32 28" className="absolute bottom-0 left-0 h-7 w-8" aria-hidden="true">
                  <ellipse cx="13" cy="15" rx="11.5" ry="8" fill="#f4f0f5" />
                  <path d="M14 12 L26 0 L22 9 L16 15Z" fill="#2ad63a" />
                  <path d="M10 14 L10 2 L16 9 L14 15Z" fill="#1414d2" />
                  <path d="M13 13 L30 22 L20 21 L12 16Z" fill="#dc1420" />
                </svg>
                <div className="absolute right-0 bottom-0 flex h-[18px] w-[133px] items-center bg-[#000020] pt-px pl-[7px] font-['Open_Sans','Noto_Sans',sans-serif] whitespace-nowrap text-white">
                  Stopped at End of Job
                </div>
                <Glyph name="Info" className="absolute right-0 bottom-0 size-7 pb-px pl-1" />
              </div>

              <div className="mt-1 flex h-5 shrink-0 items-center justify-between border-t border-[#d5d2d8] bg-[#9e989f] pr-1 pb-[2px] pl-[3px] text-[#45424a]">
                출력
                <button aria-label="Close output">
                  <svg viewBox="0 0 8 8" className="size-2" aria-hidden="true">
                    <path d="M1 1 L7 7 M7 1 L1 7" stroke="#3a373d" />
                  </svg>
                </button>
              </div>
              <ul className="h-[84px] shrink-0 bg-white p-[2px] pt-px pl-[1px]">
                <li className="h-[13px] bg-[#3591f6] pl-px leading-[13px] text-[#e8f2ff]">6 슬롯가공</li>
              </ul>
              <div className="flex h-4 shrink-0 items-start bg-linear-to-b from-[#5c5a5e] to-[#828085]">
                <span className="mt-[2px] ml-px flex gap-[2px]">
                  {["M3 3 V8 M7 3 V8 L4 5.5Z", "M6.5 3 V8 L3.5 5.5Z", "M4 3 V8 L7 5.5Z", "M8 3 V8 M4 3 V8 L7 5.5Z"].map((d, i) => (
                    <button key={i} aria-label={"Tab scroll " + (i + 1)} className="bg-[#f3f0f5]">
                      <svg viewBox="0 0 11 11" className="size-[11px]" aria-hidden="true">
                        <path d={d} fill="#333" stroke="#333" strokeWidth=".6" />
                      </svg>
                    </button>
                  ))}
                </span>
                <button className="z-10 ml-1 h-[14px] bg-white pr-3 pl-[6px] leading-[14px] font-bold [clip-path:polygon(0_0,100%_0,76%_100%,4%_100%)]">출력</button>
                <button className="-ml-[10px] h-[14px] bg-linear-to-b from-[#e9e6ee] to-[#aaa7b4] pr-3 pl-[14px] leading-[14px] [clip-path:polygon(14%_0,100%_0,84%_100%,0_100%)]">Warnings</button>
                <button className="-ml-[10px] h-[14px] bg-linear-to-b from-[#e9e6ee] to-[#aaa7b4] pr-3 pl-3 leading-[14px] [clip-path:polygon(24%_0,100%_0,74%_100%,0_100%)]">Pick</button>
              </div>
            </section>

            <div className="flex h-[17px] shrink-0 items-stretch bg-[#f2ecf5]">
              <span className="w-[81px] bg-[#c3cbe1] pl-px text-[9px] leading-[13px] text-[#4c5470]">Isometric 1.34</span>
              <svg viewBox="0 0 34 10" className="mt-[2px] ml-auto h-[10px] w-[34px]" aria-hidden="true">
                <path d="M1.5 1.5 H10 V8 H1.5Z M1.5 4.5 H10 M12.5 1.5 H21 V8 H12.5Z M16.7 1.5 V8" fill="#fff" stroke="#222" />
                <path d="M24 1 H33 V9 H24Z" fill="#c8c4cb" />
                <path d="M26 2.5 L31 8 M31 2.5 L26 8" stroke="#777" />
              </svg>
            </div>

            <section className="mt-[3px] shrink-0 bg-[#f2ecf5]">
              <h2 className="flex h-5 items-center bg-[#c3cbe1] pl-1 text-[#4c5470]">
                시뮬레이션
                <PinClose />
              </h2>
              <div className="flex h-[51px] flex-col gap-[3px] px-[3px] pt-[3px]">
                <div className="flex h-[18px] items-center pl-[7px]">
                  <input
                    type="range"
                    aria-label="Position"
                    defaultValue={0}
                    className="h-[14px] flex-1 appearance-none bg-transparent outline-none [&::-webkit-slider-runnable-track]:h-[9px] [&::-webkit-slider-runnable-track]:border [&::-webkit-slider-runnable-track]:border-[#dcd6df] [&::-webkit-slider-runnable-track]:bg-[#eae4ed] [&::-webkit-slider-thumb]:-mt-[3px] [&::-webkit-slider-thumb]:h-[13px] [&::-webkit-slider-thumb]:w-2 [&::-webkit-slider-thumb]:appearance-none [&::-webkit-slider-thumb]:rounded-t-sm [&::-webkit-slider-thumb]:border [&::-webkit-slider-thumb]:border-[#aaa5ae] [&::-webkit-slider-thumb]:bg-[#f6f1f8]"
                  />
                  <span className="ml-2 flex">
                    {navButtons.map((b) => (
                      <button
                        key={b.name}
                        aria-label={b.name}
                        className={
                          (b.on
                            ? "flex h-[17px] items-center justify-center rounded-xs border border-[#77737e] bg-linear-to-b from-[#fbf9fc] to-[#d3cedb] text-[#10106a] "
                            : "flex h-[17px] items-center justify-center border border-[#c6c1ca] text-[#8f8a94] ") + b.size
                        }
                      >
                        <svg viewBox="0 0 13 13" className="size-[13px] shrink-0" aria-hidden="true">
                          <path d={b.d} fill="currentColor" stroke="currentColor" strokeWidth=".8" />
                        </svg>
                      </button>
                    ))}
                    <button aria-label="Search" className="ml-[5px] flex h-[17px] w-[15px] items-center justify-center border border-[#c6c1ca]">
                      <svg viewBox="0 0 12 12" className="size-3" aria-hidden="true">
                        <circle cx="5" cy="5" r="3" fill="none" stroke="#8f8a94" />
                        <path d="M7.2 7.2 L11 11" stroke="#8f8a94" strokeWidth="1.4" />
                      </svg>
                    </button>
                  </span>
                </div>
                <div className="flex h-[18px] items-center pl-[9px]">
                  <button className="flex h-[17px] w-[56px] shrink-0 items-center border border-[#77727c] bg-linear-to-b from-[#fbf9fc] to-[#dcd8df] pl-[3px]">
                    <svg viewBox="0 0 10 10" className="size-[10px] shrink-0" aria-hidden="true">
                      <circle cx="5" cy="5" r="4.2" fill="none" stroke="#333" />
                      <path d="M5 1 V5.5" stroke="#333" strokeWidth="1.2" />
                    </svg>
                    Constant
                  </button>
                  <input type="range" aria-label="Rate" defaultValue={4} className={"ml-[10px] flex-1 " + slider} />
                  <span className="ml-[7px] flex h-[17px] w-3 flex-col border border-[#bcb7c0]">
                    <button aria-label="Increase" className="flex flex-1 items-center justify-center border-b border-[#bcb7c0]">
                      <Caret className="h-[2px] w-1 rotate-180" />
                    </button>
                    <button aria-label="Decrease" className="flex flex-1 items-center justify-center">
                      <Caret className="h-[2px] w-1" />
                    </button>
                  </span>
                  <input aria-label="Step" defaultValue="1" className="mr-[118px] h-[17px] w-5 border border-[#e4dee7] bg-transparent pl-[2px] outline-none" />
                </div>
              </div>
            </section>

            <div className="flex h-[19px] shrink-0 items-start border-t border-[#1e1d20] pl-[3px] text-[#ece9ee]">
              <button className="flex h-[17px] items-center gap-2 rounded-b-sm bg-[#e6e2ec] px-1 text-[#3a3a44]">
                <svg viewBox="0 0 5 8" className="h-2 w-[5px]" aria-hidden="true">
                  <path d="M0 0 V8 L5 4Z" fill="#0a0a78" />
                </svg>
                시뮬레이션
              </button>
              <button className="flex h-[17px] items-center gap-[3px] px-[6px]">
                <svg viewBox="0 0 12 10" className="h-[10px] w-3" aria-hidden="true">
                  <path d="M0 5 L6 1 L12 4 L6 9Z" fill="#fff" />
                </svg>
                좌표창
              </button>
            </div>
          </main>

          {/* tool column at the window edge */}
          <aside className="flex w-[22px] shrink-0 flex-col overflow-hidden">
            <div className="h-[53px] shrink-0 border-l border-[#e4e1e8]" />
            <div className="flex flex-col border-l border-[#e4e1e8] bg-linear-to-r from-[#cfced8] to-[#b3b2be] pl-[3px]">
              <span className="mt-[3px] mb-px ml-[2px] border-t-2 border-dotted border-[#333]" />
              {["SlabHatch", "SlabBoss", "Chamfer"].map((n) => (
                <SideTool key={n} name={n} />
              ))}
              <span className="my-[3px] h-px shrink-0 bg-[#8e8d98]" />
              {["BossCube", "SlabSpiral", "DrillFace", "DrillDepth", "Rings", "Zigzag", "Concentric", "PlanesCut", "PlanesEdit"].map((n) => (
                <SideTool key={n} name={n} />
              ))}
              <span className="mt-1 h-px shrink-0 bg-[#8e8d98]" />
              <span className="mt-1 -ml-[3px] h-2 shrink-0 bg-linear-to-r from-[#a5a4b0] to-[#4a494f]" />
              <span className="mt-[3px] mb-1 ml-[2px] border-t-2 border-dotted border-[#333]" />
              <button className="flex h-6 flex-col items-start text-[12px] leading-[13px] font-bold text-[#8290b2]">
                xyz
                <svg viewBox="0 0 20 6" className="h-[6px] w-5" aria-hidden="true">
                  <circle cx="9" cy="3" r="2.8" fill="#7f95c6" />
                </svg>
              </button>
              <button className="flex h-6 flex-col items-start text-[12px] leading-[13px] font-bold text-[#8290b2]">
                xyz
                <svg viewBox="0 0 20 6" className="h-[6px] w-5" aria-hidden="true">
                  <circle cx="3" cy="3" r="2.2" fill="none" stroke="#7f95c6" />
                  <path d="M6 3 H12 M10 1 L12 3 L10 5" fill="none" stroke="#7f95c6" />
                  <circle cx="16" cy="3" r="2.6" fill="#7f95c6" />
                </svg>
              </button>
              <SideCaret />
              <button className="my-[3px] ml-[2px] h-[18px] w-6 border-b border-l border-[#7f8fb4] pl-px text-left text-[13px] leading-[18px] font-bold text-[#8290b2]">2D</button>
              <SideTool name="Intersect" />
              <SideTool name="Pin" />
              <SideCaret />
              <span className="flex flex-col border border-[#c9a25a] bg-linear-to-b from-[#fbe3b4] to-[#f7b95a]">
                <button aria-label="Layout" className="flex h-5 w-6 shrink-0 items-center">
                  <Glyph name="Layout" className="size-[18px] shrink-0" />
                </button>
                <SideCaret />
              </span>
              <span className="h-1 shrink-0" />
              <SideTool name="Cross" />
              <SideTool name="Bend" />
              <span className="-ml-[3px] h-[7px] shrink-0 bg-linear-to-r from-[#a5a4b0] to-[#4a494f]" />
            </div>
          </aside>
        </div>

        <footer className="flex h-3 shrink-0 items-start justify-between overflow-hidden border-b border-[#8c8f98] bg-linear-to-b from-[#45454c] to-[#2f3038] pt-[3px] whitespace-nowrap text-[#c6c4cb]">
          <span>Ready</span>
          <span className="flex text-[9px]">
            {statusCells.map((c, i) => (
              <span key={c} className={i > 4 ? "border-l border-[#b5b3ba] px-px font-bold text-white" : "border-l border-[#b5b3ba] px-px"}>
                {c}
              </span>
            ))}
          </span>
        </footer>
      </div>
    </div>
  );
}
